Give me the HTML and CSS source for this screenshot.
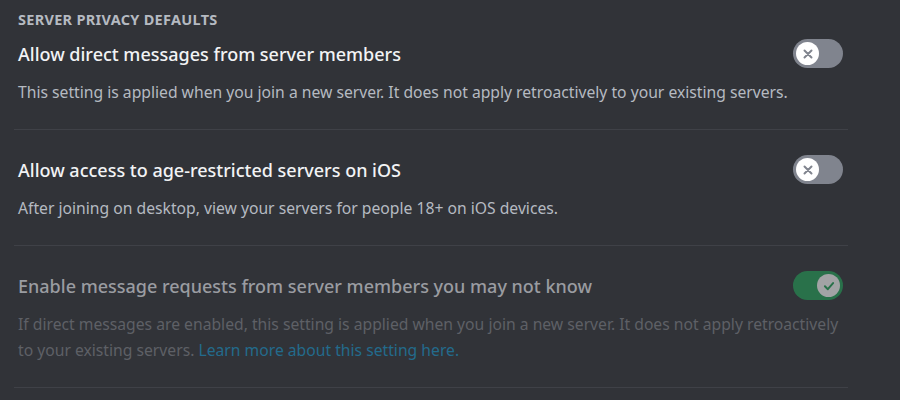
FILE: index.html
```html
<!DOCTYPE html>
<html lang="en">
<head>
    <meta charset="UTF-8">
    <title>Privacy & Safety</title>
    <link rel="stylesheet" href="styles.css">
</head>
<body>
    <div class="settings">
        <h2 class="section-title">Server Privacy Defaults</h2>

        <div class="setting">
            <div class="setting-row">
                <div class="setting-label">Allow direct messages from server members</div>
                <div class="switch">
                    <span class="knob">
                        <svg viewBox="0 0 24 24" width="14" height="14"><path d="M6 6L18 18M18 6L6 18" stroke="#80848e" stroke-width="3.4" stroke-linecap="round"/></svg>
                    </span>
                </div>
            </div>
            <div class="setting-desc">This setting is applied when you join a new server. It does not apply retroactively to your existing servers.</div>
        </div>

        <div class="setting">
            <div class="setting-row">
                <div class="setting-label">Allow access to age-restricted servers on iOS</div>
                <div class="switch">
                    <span class="knob">
                        <svg viewBox="0 0 24 24" width="14" height="14"><path d="M6 6L18 18M18 6L6 18" stroke="#80848e" stroke-width="3.4" stroke-linecap="round"/></svg>
                    </span>
                </div>
            </div>
            <div class="setting-desc">After joining on desktop, view your servers for people 18+ on iOS devices.</div>
        </div>

        <div class="setting disabled">
            <div class="setting-row">
                <div class="setting-label">Enable message requests from server members you may not know</div>
                <div class="switch on">
                    <span class="knob">
                        <svg viewBox="0 0 24 24" width="14" height="14"><path d="M5 12.5L10 17.5L19 7" fill="none" stroke="#23a55a" stroke-width="3.4" stroke-linecap="round" stroke-linejoin="round"/></svg>
                    </span>
                </div>
            </div>
            <div class="setting-desc">If direct messages are enabled, this setting is applied when you join a new server. It does not apply retroactively to your existing servers. <a href="#">Learn more about this setting here.</a></div>
        </div>
    </div>
</body>
</html>
```

FILE: styles.css
```css
body {
    margin: 0;
    background-color: #313338;
    font-family: "Noto Sans", sans-serif;
    color: #f2f3f5;
}

.settings {
    width: 825px;
    margin-left: 18px;
    padding-top: 11px;
}

.section-title {
    margin: 0 0 12px;
    font-size: 14.5px;
    line-height: 16px;
    font-weight: 700;
    text-transform: uppercase;
    letter-spacing: 0.02em;
    color: #b5bac1;
}

.setting {
    margin: 0 -5px 0 -4px;
    padding: 0 5px 24px 4px;
    border-bottom: 1px solid #3f4147;
}

.setting + .setting {
    padding-top: 25px;
}

.setting-row {
    display: flex;
    align-items: center;
    justify-content: space-between;
}

.setting-label {
    font-size: 18px;
    font-weight: 500;
    line-height: 24px;
}

.setting-desc {
    margin-top: 11px;
    font-size: 15.7px;
    line-height: 26px;
    color: #b5bac1;
}

.setting-desc a {
    color: #00a8fc;
    text-decoration: none;
}

.switch {
    display: flex;
    align-items: center;
    flex-shrink: 0;
    width: 50px;
    height: 29px;
    padding: 0 3px;
    box-sizing: border-box;
    border-radius: 15px;
    background-color: #80848e;
}

.switch.on {
    justify-content: flex-end;
    background-color: #23a55a;
}

.knob {
    display: flex;
    align-items: center;
    justify-content: center;
    width: 23px;
    height: 23px;
    border-radius: 50%;
    background-color: #fff;
}

.disabled .setting-label {
    color: #9a9ca1;
}

.disabled .setting-desc {
    color: #5e6066;
}

.disabled .setting-desc a {
    color: #236b8c;
}

.disabled .switch {
    opacity: 0.55;
}
```
